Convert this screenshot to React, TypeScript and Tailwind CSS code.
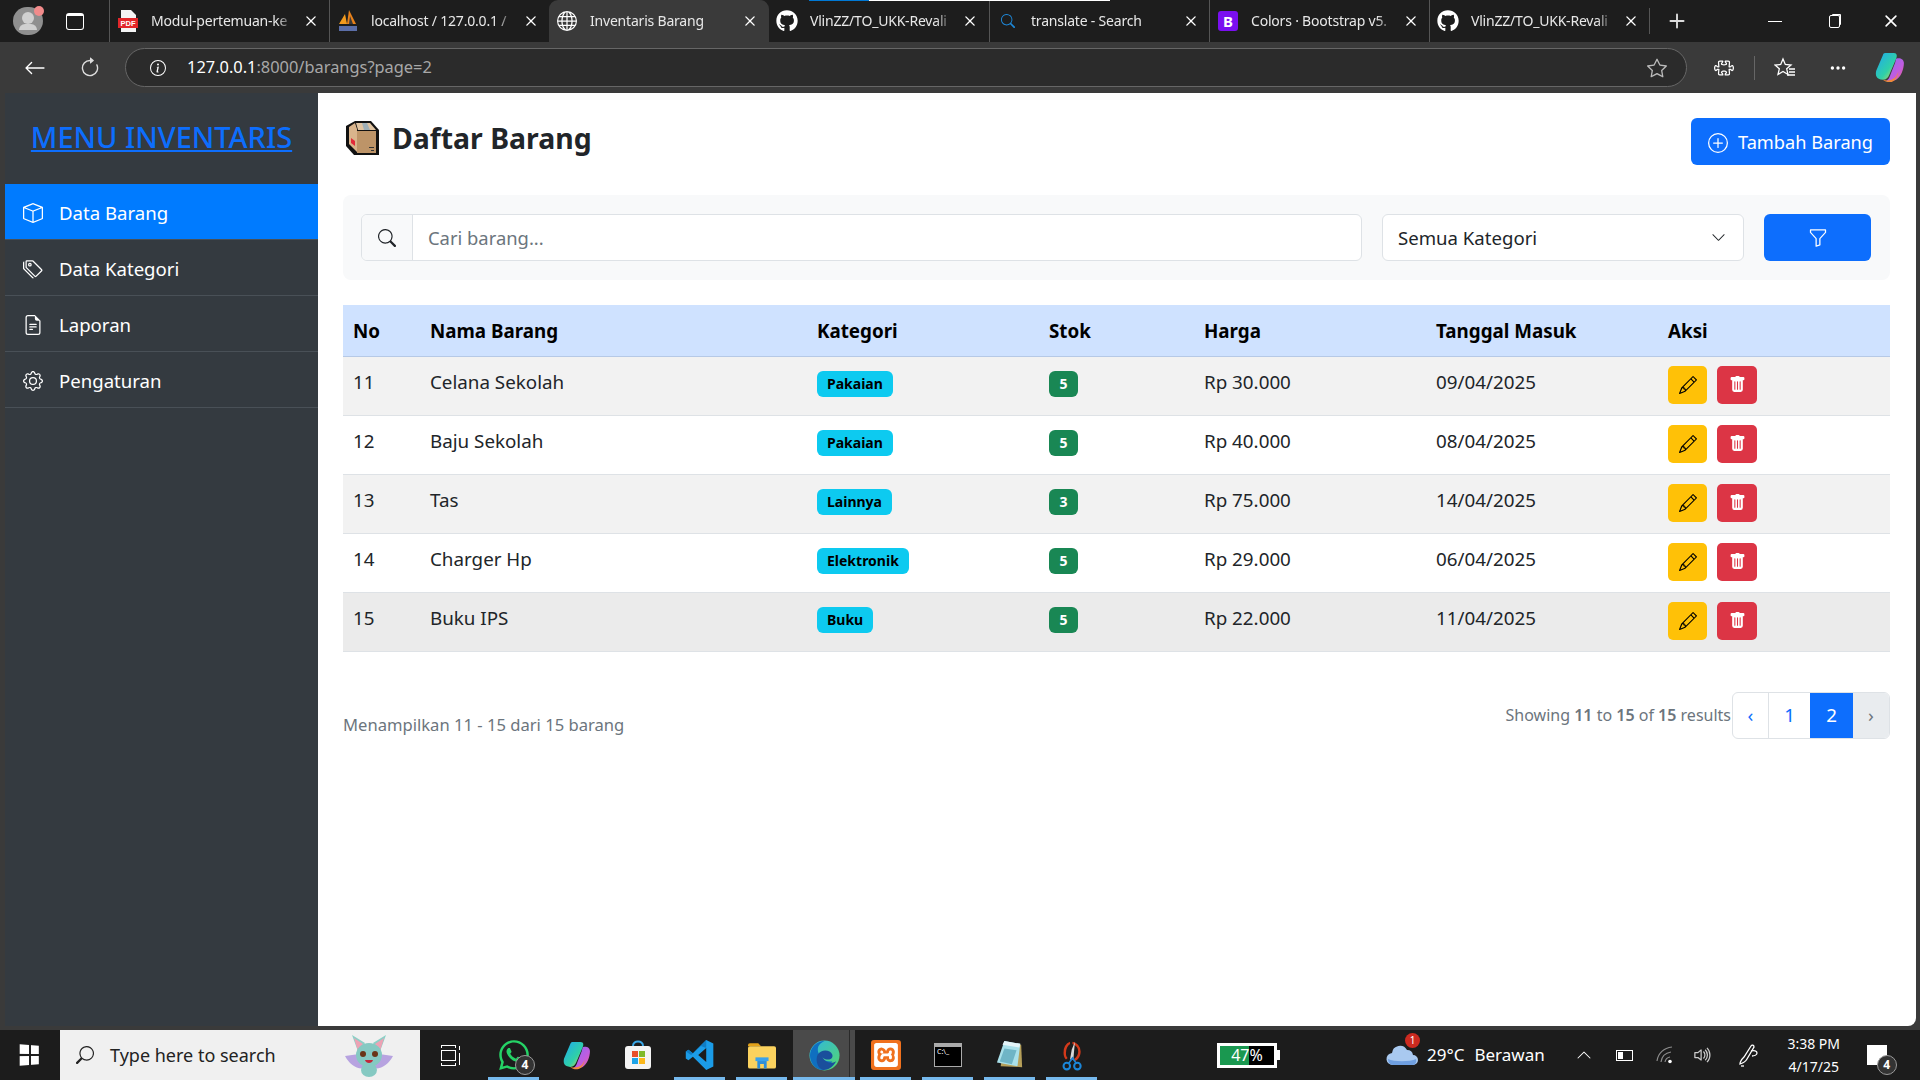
import React from "react";
import { BsBox, BsTags, BsFileEarmarkText, BsGear, BsPlusCircle, BsSearch, BsFunnel, BsPencil, BsTrashFill, BsChevronDown, BsStar, BsPuzzle, BsThreeDots, BsInfoCircle, BsArrowLeft, BsArrowClockwise, BsGlobe, BsX, BsPlus, BsChevronUp, BsVolumeUp } from "react-icons/bs";
import { FaGithub, FaWhatsapp } from "react-icons/fa";
import { SiXampp } from "react-icons/si";

interface Barang {
  no: number;
  nama: string;
  kategori: string;
  stok: number;
  harga: string;
  tanggal: string;
}

const barangs: Barang[] = [
  { no: 11, nama: "Celana Sekolah", kategori: "Pakaian", stok: 5, harga: "Rp 30.000", tanggal: "09/04/2025" },
  { no: 12, nama: "Baju Sekolah", kategori: "Pakaian", stok: 5, harga: "Rp 40.000", tanggal: "08/04/2025" },
  { no: 13, nama: "Tas", kategori: "Lainnya", stok: 3, harga: "Rp 75.000", tanggal: "14/04/2025" },
  { no: 14, nama: "Charger Hp", kategori: "Elektronik", stok: 5, harga: "Rp 29.000", tanggal: "06/04/2025" },
  { no: 15, nama: "Buku IPS", kategori: "Buku", stok: 5, harga: "Rp 22.000", tanggal: "11/04/2025" },
];

const PdfIcon = () => (
  <svg width="20" height="22" viewBox="0 0 20 22">
    <path d="M3 0h10l5 5v17H3z" fill="#f4f4f4" />
    <rect x="0" y="8" width="20" height="10" fill="#e2262a" />
    <text x="10" y="16" fontSize="7.5" fontWeight="700" fill="#fff" textAnchor="middle" fontFamily="Liberation Sans">PDF</text>
  </svg>
);

const PmaIcon = () => (
  <svg width="22" height="24" viewBox="0 0 22 24">
    <path d="M2 15L8 5l2 10z" fill="#f29a1d" />
    <path d="M10 15l2-14 7 14z" fill="#e8811a" />
    <path d="M12 15l1-8 3 8z" fill="#3a3a3a" />
    <rect x="2" y="17" width="18" height="5" fill="#5b6ea8" />
  </svg>
);

const CopilotIcon = ({ size }: { size: number }) => (
  <svg width={size} height={size} viewBox="0 0 28 28">
    <defs>
      <linearGradient id={`cp1${size}`} x1="0" y1="0" x2="1" y2="1">
        <stop offset="0" stopColor="#1fa8f0" />
        <stop offset="0.6" stopColor="#2fd0a8" />
        <stop offset="1" stopColor="#e8d84a" />
      </linearGradient>
      <linearGradient id={`cp2${size}`} x1="0" y1="0" x2="1" y2="1">
        <stop offset="0" stopColor="#8a6cf0" />
        <stop offset="0.6" stopColor="#c05ce0" />
        <stop offset="1" stopColor="#f0608a" />
      </linearGradient>
    </defs>
    <path d="M10 1h8c3 0 3 3 2 5l-6 14c-1 3-3 5-6 5-6 0-7-4-6-8L8 3c.4-1.300 1-2 2-2z" fill={`url(#cp1${size})`} />
    <path d="M20 6c3-1 7 0 7 4 0 6-3 13-7 15-2 1-5 2-9 1 2-1 3-3 4-6l4-10z" fill={`url(#cp2${size})`} />
    <path d="M8 25c3 1 7 1 10-1 2-1 3-4 4-6-1 5-3 8-6 9-3 .5-6 0-8-2z" fill="#f08a3a" />
  </svg>
);

const BatIcon = () => (
  <svg width="52" height="46" viewBox="0 0 52 46">
    <path d="M2 24l14-2 6 14c-8 2-16-4-20-12zM50 24l-14-2-6 14c8 2 16-4 20-12z" fill="#b7a3e0" />
    <path d="M16 22L9 3l13 8zM36 22l7-19-13 8z" fill="#8ccfc6" />
    <path d="M15 19l-4-13 9 6zM37 19l4-13-9 6z" fill="#eda2b4" />
    <ellipse cx="26" cy="23" rx="13" ry="12" fill="#85c9c2" />
    <ellipse cx="26" cy="38" rx="8" ry="7" fill="#85c9c2" />
    <circle cx="20" cy="22" r="3" fill="#6a3517" />
    <circle cx="32" cy="22" r="3" fill="#6a3517" />
    <path d="M22 28h8c-1 4-7 4-8 0z" fill="#c2283a" />
  </svg>
);

const StoreIcon = () => (
  <svg width="28" height="30" viewBox="0 0 28 30">
    <path d="M9 6c0-6 10-6 10 0" fill="none" stroke="#3aa8e8" strokeWidth="2" />
    <rect x="1" y="6" width="26" height="23" rx="3" fill="#f4f4f4" />
    <rect x="8" y="11" width="6" height="6" fill="#e8502a" />
    <rect x="15" y="11" width="6" height="6" fill="#7fba2a" />
    <rect x="8" y="18" width="6" height="6" fill="#1ea4e8" />
    <rect x="15" y="18" width="6" height="6" fill="#fbb81c" />
  </svg>
);

const VscodeIcon = () => (
  <svg width="32" height="32" viewBox="0 0 32 36">
    <path d="M23 1l8 4v26l-8 4L8 20l-5 4-3-2v-8l3-2 5 4z M23 10l-9 8 9 8z" fill="#1b9ce8" fillRule="evenodd" />
    <path d="M23 1l-15 15-5-4-3 2 6 4 11-10 6 2z" fill="#0f7cc4" />
  </svg>
);

const FolderIcon = () => (
  <svg width="28" height="27" viewBox="0 0 30 28">
    <path d="M0 3a2 2 0 012-2h9l3 3h-14z" fill="#e3a21a" />
    <rect x="0" y="4" width="30" height="24" rx="2" fill="#fbd25e" />
    <path d="M10 28v-9h10v9h-3v-5h-4v5z" fill="#2f8fd8" />
    <rect x="8" y="16" width="14" height="4" fill="#3aa2ea" />
  </svg>
);

const EdgeIcon = () => (
  <svg width="31" height="31" viewBox="0 0 32 32">
    <defs>
      <linearGradient id="edgeA" x1="0" y1="0" x2="1" y2="1">
        <stop offset="0" stopColor="#2fb6e0" />
        <stop offset="1" stopColor="#55d66e" />
      </linearGradient>
    </defs>
    <circle cx="16" cy="16" r="15.500" fill="url(#edgeA)" />
    <path d="M1 16C1 8 8 1 16 1c-7 3-8 8-6 13 2 6 8 9 14 8-3 6-7 9-10 9C7 31 1 24 1 16z" fill="#0f6fc0" />
    <path d="M9 15c4-6 13-5 15 0 1 3-1 5-3 5-4 1-7-2-7-2s5 9 14 4c-3 6-8 9-13 9-6-1-9-10-6-16z" fill="#1a4f9c" />
  </svg>
);

const NotepadIcon = () => (
  <svg width="28" height="30" viewBox="0 0 30 32">
    <path d="M9 2l18 3 1 24-23-1z" fill="#b6a05a" />
    <path d="M9 1l17 3-3 24L1 24z" fill="#a9e0ea" />
    <path d="M9 1l17 3-1 4L7 5z" fill="#e4f4f8" />
    <path d="M9 9l13 2-5 15-13-3z" fill="#6fb5c6" />
  </svg>
);

const SnipIcon = () => (
  <svg width="25" height="31" viewBox="0 0 28 38">
    <path d="M14 2a11 13 0 0110 12c0 6-3 10-7 12l-1-3c3-2 5-5 5-9s-2-7-7-9z" fill="#d3391a" />
    <path d="M11 2a11 13 0 00-8 14c0 3 1 6 3 8l2-2c-2-2-2-4-2-6 0-5 2-9 5-11z" fill="#d3391a" />
    <path d="M17 2l-2 22h-4l2-12z" fill="#d9d9d9" />
    <circle cx="7" cy="32" r="4" fill="none" stroke="#1b86d8" strokeWidth="2.500" />
    <circle cx="20" cy="32" r="4" fill="none" stroke="#1b86d8" strokeWidth="2.500" />
    <path d="M9 29l5-7 5 7" fill="none" stroke="#1b86d8" strokeWidth="2" />
  </svg>
);

const BoxEmoji = () => (
  <svg width="36" height="36" viewBox="0 0 36 36">
    <path d="M10 1h16l8 9v25H9L1 26V6z" fill="#111" />
    <path d="M4 7l6-4 2 6v23l-8-8z" fill="#d9b48c" />
    <path d="M11 3h14l6 7H13z" fill="#e0c4a2" />
    <path d="M17 3h5l3 7h-6z" fill="#9fb0b8" />
    <rect x="12" y="11" width="19" height="22" fill="#bd9468" />
    <path d="M6 18l4 3v5l-4-3z" fill="#e22a3a" />
    <path d="M24 27h5v1h-5zM26 30h3v1h-3z" fill="#333" />
  </svg>
);

const FavoritesIcon = () => (
  <svg width="22" height="22" viewBox="0 0 22 22" fill="none" stroke="#fff" strokeWidth="1.300">
    <path d="M9 2l2.300 5.500 5.700.5-4.300 3.800 1.300 5.700L9 14.500 4 17.500l1.300-5.700L1 8l5.700-.5z" />
    <path d="M15 12h6M15 15h6M13 18h8" />
  </svg>
);

const CloudIcon = () => (
  <svg width="32" height="22" viewBox="0 0 32 22">
    <path d="M7 21a6 6 0 01-1-12 8 8 0 0115-3 6 6 0 016 5 5 5 0 010 10z" fill="#a9c9f0" />
    <path d="M2 15c6 3 22 3 28 0 1 3-1 6-3 6H7c-3 0-5-3-5-6z" fill="#6f9fe0" />
  </svg>
);

const WifiIcon = () => (
  <svg width="20" height="20" viewBox="0 0 20 20" fill="none" stroke="#8c8c8c" strokeWidth="1.200">
    <path d="M2 16C3 8 9 3 17 2" />
    <path d="M6 17c.6-5 4-9 10-10" />
    <path d="M10 17c.4-2.500 2-4.500 5-5" />
    <circle cx="15" cy="16.500" r="1.800" fill="#fff" stroke="none" />
  </svg>
);

const PenIcon = () => (
  <svg width="22" height="24" viewBox="0 0 22 24" fill="none" stroke="#fff" strokeWidth="1.300">
    <path d="M2 21c0-3 2-5 4-7l7-11c1-1.500 3-1 3 1l-7 12c-1 2-4 4-7 5z" />
    <path d="M13 8c3-1 6 0 6 2s-3 3-5 3" />
    <path d="M3 23h3" />
  </svg>
);

const tabs = [
  { title: "Modul-pertemuan-ke", icon: <PdfIcon /> },
  { title: "localhost / 127.0.0.1 /", icon: <PmaIcon /> },
  { title: "Inventaris Barang", icon: <BsGlobe className="text-[20px] text-white" />, active: true },
  { title: "VlinZZ/TO_UKK-Revali", icon: <FaGithub className="text-[22px] text-white" /> },
  { title: "translate - Search", icon: <BsSearch className="text-[14px] text-[#1e88d8]" /> },
  { title: "Colors · Bootstrap v5.", icon: <span className="w-[20px] h-[20px] rounded-[3px] bg-[#7a0ff0] text-white text-[15px] font-bold flex items-center justify-center">B</span> },
  { title: "VlinZZ/TO_UKK-Revali", icon: <FaGithub className="text-[22px] text-white" /> },
];

const sideMenu = [
  { label: "Data Barang", icon: <BsBox />, active: true },
  { label: "Data Kategori", icon: <BsTags /> },
  { label: "Laporan", icon: <BsFileEarmarkText /> },
  { label: "Pengaturan", icon: <BsGear /> },
];

function TabBar() {
  return (
    <div className="h-[42px] bg-[#1d1d1d] flex items-center shrink-0 relative">
      <div className="absolute top-0 left-[809px] w-[60px] h-px bg-[#0078d4]" />
      <div className="absolute top-0 left-[869px] w-[241px] h-px bg-white" />
      <div className="w-[109px] h-full flex items-center shrink-0">
        <div className="ml-[13px] w-[30px] h-[28px] rounded-full bg-[#8f8f8f] relative flex flex-col items-center justify-center overflow-visible">
          <div className="w-[12px] h-[12px] rounded-full bg-[#d0d0d0]" />
          <div className="w-[18px] h-[6px] rounded-t-full bg-[#d0d0d0]" />
          <div className="absolute -top-[1px] -right-[1px] w-[10px] h-[10px] rounded-full bg-[#f28b8b]" />
        </div>
        <div className="ml-[23px] w-[18px] h-[17px] rounded-[3px] border-[1.5px] border-white border-t-[3px]" />
      </div>
      {tabs.map((tab, i) => (
        <div
          key={i}
          className={`w-[220px] h-full flex items-center shrink-0 ${tab.active ? "bg-[#3a3a3a] rounded-t-[9px]" : i === 3 ? "" : "border-l border-[#555]"}`}
        >
          <div className="w-[36px] flex justify-center shrink-0">{tab.icon}</div>
          <div className="ml-[5px] w-[143px] pb-px overflow-hidden whitespace-nowrap text-[14px] text-[#e8e8e8] tracking-[-0.2px] [mask-image:linear-gradient(to_right,black_88%,transparent)]">{tab.title}</div>
          <BsX className="text-[22px] text-white ml-[6px]" />
        </div>
      ))}
      <div className="border-l border-[#555] h-[26px]" />
      <BsPlus className="text-[30px] text-[#ddd] ml-[12px]" />
      <div className="ml-auto flex items-center text-white pr-[16px]">
        <div className="w-[14px] h-px bg-white mr-[47px]" />
        <div className="w-[11px] h-[13px] border border-white rounded-[2px] mr-[38px] shadow-[2px_-2px_0_-1px_#fff]" />
        <BsX className="text-[26px]" />
      </div>
    </div>
  );
}

function ToolBar() {
  return (
    <div className="h-[51px] bg-[#3a3a3a] flex items-center shrink-0 text-white">
      <BsArrowLeft className="text-[22px] ml-[24px]" />
      <BsArrowClockwise className="text-[22px] ml-[33px] text-[#ddd]" />
      <div className="ml-[24px] w-[1562px] h-[39px] rounded-full bg-[#2b2b2b] border border-[#666] flex items-center pl-[24px] pr-[19px]">
        <BsInfoCircle className="text-[16px]" />
        <span className="ml-[21px] text-[16.4px] text-white">127.0.0.1<span className="text-[#a8a8a8]">:8000/barangs?page=2</span></span>
        <BsStar className="text-[20px] ml-auto text-[#bbb]" />
      </div>
      <BsPuzzle className="text-[20px] ml-[27px]" />
      <div className="w-px h-[24px] bg-[#666] ml-[20px]" />
      <div className="ml-[19px]"><FavoritesIcon /></div>
      <BsThreeDots className="text-[18px] ml-[33px]" />
      <div className="ml-[27px]"><CopilotIcon size={31} /></div>
    </div>
  );
}

function Sidebar() {
  return (
    <aside className="w-[313px] shrink-0 bg-[#343a40] text-white">
      <div className="h-[91px] flex items-center justify-center pb-[3px]">
        <a className="text-[29px] font-medium leading-[34px] text-[#0d6efd] underline">MENU INVENTARIS</a>
      </div>
      {sideMenu.map((item) => (
        <div
          key={item.label}
          className={`h-[56px] flex items-center pl-[18px] pt-[2px] border-b border-[#495057] text-[18.6px] ${item.active ? "bg-[#007bff]" : ""}`}
        >
          <span className="w-[36px] text-[20px]">{item.icon}</span>
          {item.label}
        </div>
      ))}
    </aside>
  );
}

function Row({ item, index }: { item: Barang; index: number }) {
  const bg = index === 4 ? "bg-[#ebebeb]" : index % 2 === 0 ? "bg-[#f2f2f2]" : "bg-white";
  return (
    <tr className={`${bg} border-b border-[#dee2e6] h-[59px] align-top text-[18.8px] text-[#212529]`}>
      <td className="pl-[10px] pt-[11px]">{item.no}</td>
      <td className="pl-[10px] pt-[11px]">{item.nama}</td>
      <td className="pl-[10px] pt-[11px]">
        <span className="inline-block h-[26px] leading-[26px] px-[10px] rounded-[6px] bg-[#0dcaf0] text-black text-[14px] font-bold">{item.kategori}</span>
      </td>
      <td className="pl-[10px] pt-[11px]">
        <span className="inline-block w-[29px] h-[26px] leading-[26px] text-center rounded-[6px] bg-[#198754] text-white text-[14px] font-bold">{item.stok}</span>
      </td>
      <td className="pl-[10px] pt-[11px]">{item.harga}</td>
      <td className="pl-[10px] pt-[11px]">{item.tanggal}</td>
      <td className="pl-[10px] pt-[9px]">
        <div className="flex gap-[10px]">
          <button className="w-[39px] h-[38px] rounded-[5px] bg-[#ffc107] flex items-center justify-center text-black text-[18px]"><BsPencil /></button>
          <button className="w-[40px] h-[38px] rounded-[5px] bg-[#dc3545] flex items-center justify-center text-white text-[17px]"><BsTrashFill /></button>
        </div>
      </td>
    </tr>
  );
}

function Main() {
  return (
    <main className="flex-1 bg-white rounded-br-[8px] pl-[25px] pr-[26px] pt-[25px]">
      <div className="h-[47px] flex items-start justify-between">
        <div className="flex items-center gap-[11px] h-[40px] pl-[2px]">
          <BoxEmoji />
          <h1 className="text-[28.4px] font-bold text-[#212529] leading-[40px]">Daftar Barang</h1>
        </div>
        <button className="w-[199px] h-[47px] rounded-[6px] bg-[#0d6efd] text-white text-[18.2px] pt-[2px] flex items-center justify-center gap-[10px]">
          <BsPlusCircle className="text-[20px]" />
          Tambah Barang
        </button>
      </div>
      <div className="mt-[30px] h-[85px] rounded-[8px] bg-[#f8f9fa] px-[18px] pt-[19px] flex gap-[20px]">
        <div className="w-[1001px] h-[47px] flex rounded-[6px] border border-[#dee2e6] bg-white overflow-hidden">
          <div className="w-[51px] bg-[#f8f9fa] border-r border-[#dee2e6] flex items-center justify-center text-[18px] text-[#212529]"><BsSearch /></div>
          <div className="pl-[15px] flex items-center text-[18.4px] text-[#6c757d]">Cari barang...</div>
        </div>
        <div className="w-[362px] h-[47px] rounded-[6px] border border-[#dee2e6] bg-white flex items-center justify-between pl-[15px] pr-[17px] text-[18.6px] text-[#212529]">
          Semua Kategori
          <BsChevronDown className="text-[15px]" />
        </div>
        <button className="w-[107px] h-[47px] rounded-[6px] bg-[#0d6efd] text-white text-[20px] flex items-center justify-center"><BsFunnel /></button>
      </div>
      <table className="mt-[25px] w-full table-fixed border-collapse">
        <colgroup>
          <col className="w-[77px]" />
          <col className="w-[387px]" />
          <col className="w-[232px]" />
          <col className="w-[155px]" />
          <col className="w-[232px]" />
          <col className="w-[232px]" />
          <col />
        </colgroup>
        <thead>
          <tr className="h-[51px] bg-[#cfe2ff] border-b border-[#b6c9e6] text-left text-[18.8px] text-black">
            {["No", "Nama Barang", "Kategori", "Stok", "Harga", "Tanggal Masuk", "Aksi"].map((h) => (
              <th key={h} className="pl-[10px] pt-px font-bold">{h}</th>
            ))}
          </tr>
        </thead>
        <tbody>
          {barangs.map((item, i) => (
            <Row key={item.no} item={item} index={i} />
          ))}
        </tbody>
      </table>
      <div className="mt-[40px] flex justify-between items-start">
        <p className="mt-[21px] text-[16.6px] text-[#6c757d]">Menampilkan 11 - 15 dari 15 barang</p>
        <div className="flex items-center">
          <p className="text-[16px] text-[#6c757d] mr-[1px]">Showing <b className="font-semibold">11</b> to <b className="font-semibold">15</b> of <b className="font-semibold">15</b> results</p>
          <div className="flex h-[47px] border border-[#dee2e6] rounded-[6px] overflow-hidden text-[18.8px]">
            <div className="w-[36px] flex items-center justify-center text-[#0d6efd] border-r border-[#dee2e6]">‹</div>
            <div className="w-[41px] flex items-center justify-center text-[#0d6efd]">1</div>
            <div className="w-[43px] flex items-center justify-center bg-[#0d6efd] text-white">2</div>
            <div className="w-[36px] flex items-center justify-center bg-[#e9ecef] text-[#6c757d]">›</div>
          </div>
        </div>
      </div>
    </main>
  );
}

function TaskIcon({ children, running = true, active = false }: { children: React.ReactNode; running?: boolean; active?: boolean }) {
  return (
    <div className={`w-[62px] h-full relative flex items-center justify-center shrink-0 ${active ? "bg-[#4a4a4a]" : ""}`}>
      {active && <div className="absolute top-0 bottom-0 right-[5px] w-px bg-[#2a2a2a]" />}
      {children}
      {running && <div className={`absolute bottom-0 h-[3px] bg-[#76b9ed] ${active ? "left-0 right-0" : "left-[5px] right-[6px]"}`} />}
    </div>
  );
}

function Taskbar() {
  return (
    <div className="h-[50px] bg-[#1c1c1c] flex items-center shrink-0 text-white">
      <div className="w-[60px] flex justify-center">
        <div className="grid grid-cols-2 gap-[2px] w-[20px] h-[20px] [transform:perspective(40px)_rotateY(18deg)]">
          <div className="bg-white" /><div className="bg-white" /><div className="bg-white" /><div className="bg-white" />
        </div>
      </div>
      <div className="w-[360px] h-full bg-[#f0f0f0] flex items-center text-[18px] text-[#222] relative">
        <BsSearch className="text-[18px] ml-[16px] -scale-x-100" />
        <span className="ml-[16px]">Type here to search</span>
        <div className="absolute right-[25px] top-[2px]"><BatIcon /></div>
      </div>
      <div className="w-[60px] flex justify-center gap-[3px]">
        <div className="flex flex-col gap-[2px] items-center">
          <div className="w-[15px] h-[3px] border-x border-t border-white" />
          <div className="w-[15px] h-[11px] border border-white" />
          <div className="w-[15px] h-[3px] border-x border-b border-white" />
        </div>
        <div className="flex flex-col justify-center gap-[3px]">
          <div className="w-px h-[4px] bg-white" />
          <div className="w-px h-[12px] bg-white" />
        </div>
      </div>
      <div className="w-[3px]" />
      <TaskIcon>
        <FaWhatsapp className="text-[34px] text-[#25d366]" />
        <span className="absolute right-[10px] bottom-[5px] w-[20px] h-[20px] rounded-full bg-[#333] border border-[#999] text-[12px] font-bold flex items-center justify-center">4</span>
      </TaskIcon>
      <TaskIcon running={false}><CopilotIcon size={29} /></TaskIcon>
      <TaskIcon running={false}><StoreIcon /></TaskIcon>
      <TaskIcon><VscodeIcon /></TaskIcon>
      <TaskIcon><FolderIcon /></TaskIcon>
      <TaskIcon active><EdgeIcon /></TaskIcon>
      <TaskIcon>
        <div className="w-[30px] h-[30px] rounded-[3px] bg-[#f0711e] flex items-center justify-center"><SiXampp className="text-[24px] text-white" /></div>
      </TaskIcon>
      <TaskIcon>
        <div className="w-[28px] h-[24px] bg-black border border-[#aaa] border-t-[4px] text-[7px] leading-[10px] pl-[2px]">C:\_</div>
      </TaskIcon>
      <TaskIcon><NotepadIcon /></TaskIcon>
      <TaskIcon><SnipIcon /></TaskIcon>
      <div className="ml-[114px] w-[60px] h-[25px] bg-white p-[3px] flex relative">
        <div className="w-[29px] bg-[#1a9850]" />
        <div className="flex-1 bg-black" />
        <span className="absolute inset-0 flex items-center justify-center text-[16px] text-white">47%</span>
      </div>
      <div className="w-[3px] h-[10px] bg-white" />
      <div className="ml-[106px] relative">
        <CloudIcon />
        <span className="absolute -top-[11px] right-[-2px] w-[15px] h-[15px] rounded-full bg-[#cc2a20] text-[10px] flex items-center justify-center">1</span>
      </div>
      <span className="ml-[9px] text-[17px] whitespace-nowrap">29°C</span>
      <span className="ml-[10px] text-[17px] whitespace-nowrap">Berawan</span>
      <BsChevronUp className="ml-[31px] text-[16px]" />
      <div className="ml-[24px] w-[17px] h-[11px] border border-white p-px"><div className="w-[5px] h-full bg-white" /></div>
      <div className="ml-[22px]"><WifiIcon /></div>
      <BsVolumeUp className="ml-[18px] text-[20px] text-[#ccc]" />
      <div className="ml-[25px]"><PenIcon /></div>
      <div className="ml-[24px] w-[60px] text-center text-[14px] leading-[23px]">
        <div>3:38 PM</div>
        <div>4/17/25</div>
      </div>
      <div className="ml-[23px] w-[20px] h-[20px] bg-white relative">
        <span className="absolute -right-[10px] -bottom-[10px] w-[20px] h-[20px] rounded-full bg-[#333] border border-[#999] text-[12px] font-bold flex items-center justify-center">4</span>
      </div>
    </div>
  );
}

export default function App() {
  return (
    <div className="h-screen overflow-hidden flex flex-col bg-[#3a3a3a] font-['Noto_Sans','Open_Sans',sans-serif]">
      <TabBar />
      <ToolBar />
      <div className="flex-1 flex pl-[5px] pr-[4px] pb-[4px] min-h-0">
        <Sidebar />
        <Main />
      </div>
      <Taskbar />
    </div>
  );
}
